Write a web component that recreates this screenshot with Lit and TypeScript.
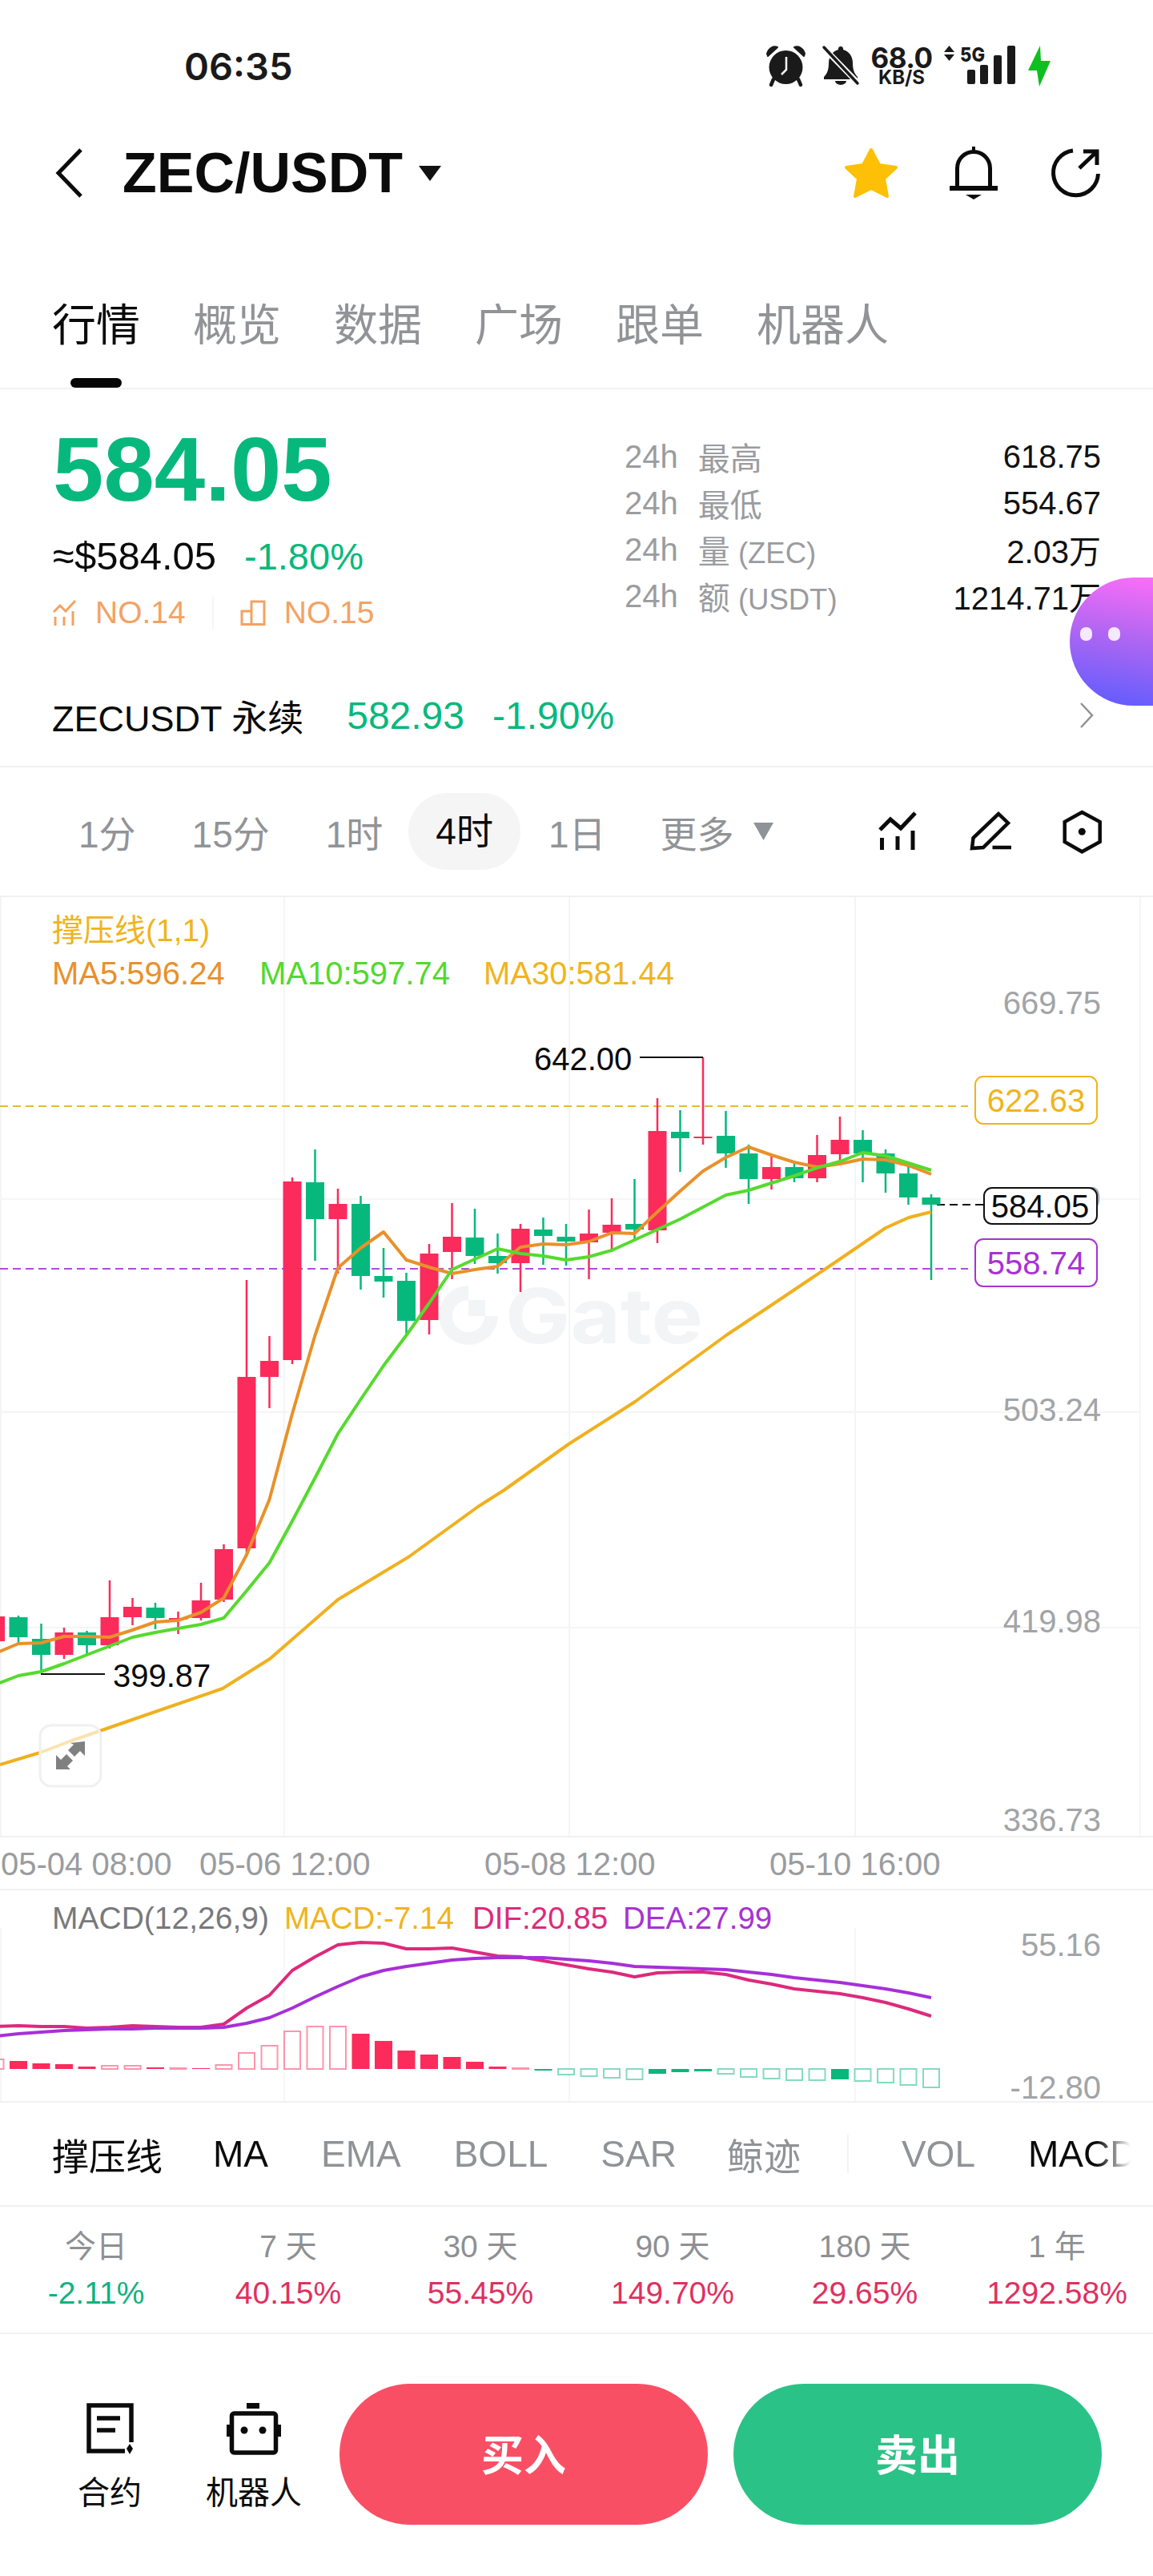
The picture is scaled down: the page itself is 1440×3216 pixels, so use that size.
import { LitElement, html, css, svg, unsafeCSS } from 'lit';
import { customElement } from 'lit/decorators.js';

type Candle = [number, number, number, number, boolean];

const X = (i: number) => 23 + 28.5 * i;
const RED = '#fb2b5b';
const GREEN = '#07b87c';

// wick top, body top, body bottom, wick bottom, rising. Index starts at -1
const CANDLES: Candle[] = [
  [2018, 2018, 2049, 2049, true],
  [2017, 2019, 2044, 2051, false],
  [2027, 2046, 2066, 2089, false],
  [2032, 2038, 2066, 2071, true],
  [2036, 2038, 2054, 2065, false],
  [1973, 2019, 2054, 2058, true],
  [1995, 2006, 2019, 2029, true],
  [2001, 2007, 2020, 2034, false],
  [2012, 2020, 2022, 2040, true],
  [1976, 1998, 2020, 2023, true],
  [1928, 1934, 1997, 2000, true],
  [1598, 1719, 1933, 1943, true],
  [1668, 1699, 1719, 1758, true],
  [1470, 1475, 1698, 1703, true],
  [1435, 1476, 1522, 1574, false],
  [1484, 1503, 1522, 1590, true],
  [1493, 1503, 1593, 1610, false],
  [1558, 1593, 1600, 1620, false],
  [1589, 1599, 1649, 1665, false],
  [1553, 1565, 1648, 1666, true],
  [1502, 1544, 1563, 1597, true],
  [1509, 1545, 1568, 1578, false],
  [1540, 1568, 1577, 1590, false],
  [1528, 1534, 1577, 1613, true],
  [1520, 1535, 1543, 1579, false],
  [1528, 1544, 1550, 1580, false],
  [1510, 1540, 1551, 1597, true],
  [1496, 1529, 1539, 1563, true],
  [1472, 1528, 1535, 1547, false],
  [1371, 1412, 1536, 1552, true],
  [1386, 1413, 1421, 1463, false],
  [1320, 1419, 1421, 1429, true],
  [1387, 1418, 1440, 1458, false],
  [1429, 1440, 1472, 1503, false],
  [1443, 1457, 1472, 1485, true],
  [1453, 1457, 1471, 1476, false],
  [1417, 1442, 1471, 1476, true],
  [1394, 1423, 1441, 1453, true],
  [1411, 1423, 1440, 1476, false],
  [1435, 1440, 1465, 1489, false],
  [1455, 1465, 1495, 1504, false],
  [1491, 1495, 1504, 1598, false],
];

const MA5 = [2064, 2052, 2051, 2043, 2043, 2044, 2035, 2025, 2023, 2013, 1995, 1941, 1872, 1765, 1667, 1583, 1558, 1538, 1573, 1582, 1590, 1585, 1581, 1557, 1553, 1554, 1550, 1539, 1540, 1513, 1487, 1462, 1445, 1432, 1442, 1451, 1457, 1453, 1447, 1448, 1455, 1466];
const MA10 = [2103, 2092, 2087, 2077, 2066, 2055, 2044, 2038, 2033, 2028, 2020, 1986, 1951, 1899, 1845, 1790, 1747, 1705, 1667, 1627, 1585, 1572, 1559, 1565, 1568, 1573, 1569, 1561, 1548, 1535, 1522, 1507, 1492, 1486, 1477, 1468, 1458, 1450, 1439, 1443, 1452, 1461];
const MA30 = '0,2203 50,2188 87,2174 165,2147 278,2108 337,2071 422,1997 510,1944 597,1881 630,1860 710,1803 793,1750 907,1667 967,1627 1040,1578 1106,1533 1135,1520 1163,1513';
const DIF = [2530, 2529, 2530, 2530, 2532, 2531, 2529, 2530, 2531, 2531, 2527, 2507, 2491, 2460, 2443, 2428, 2425, 2426, 2433, 2433, 2432, 2437, 2442, 2443, 2448, 2453, 2458, 2462, 2468, 2463, 2462, 2462, 2465, 2472, 2477, 2483, 2486, 2489, 2494, 2500, 2508, 2517];
const DEA = [2542, 2539, 2537, 2535, 2534, 2533, 2533, 2532, 2532, 2532, 2531, 2526, 2519, 2507, 2493, 2480, 2468, 2460, 2455, 2451, 2447, 2445, 2444, 2444, 2444, 2446, 2448, 2451, 2455, 2456, 2457, 2458, 2459, 2462, 2465, 2469, 2472, 2475, 2479, 2483, 2488, 2494];

// histogram height above the zero line, and whether the bar is filled
const HIST: [number, boolean][] = [
  [12, false], [10, true], [7, true], [6, true], [3, true], [4, false], [4, false], [2, true], [1, false], [1, true], [5, false],
  [20, false], [29, false], [47, false], [53, false], [53, false], [44, true], [35, true], [23, true], [18, true], [15, true],
  [9, true], [3, true], [1, false], [-2, true], [-7, false], [-9, false], [-11, false], [-13, false], [-6, true], [-4, true],
  [-3, true], [-6, false], [-10, false], [-12, false], [-14, false], [-14, false], [-13, true], [-15, false], [-17, false], [-20, false], [-23, false],
];

const STATS = [
  ['最高', '', '618.75'],
  ['最低', '', '554.67'],
  ['量', ' (ZEC)', '2.03万'],
  ['额', ' (USDT)', '1214.71万'],
];
const PERIODS = [
  ['今日', '-2.11%', true],
  ['7 天', '40.15%', false],
  ['30 天', '55.45%', false],
  ['90 天', '149.70%', false],
  ['180 天', '29.65%', false],
  ['1 年', '1292.58%', false],
];

const points = (ys: number[]) => ys.map((y, n) => `${X(n - 1)},${y}`).join(' ');

@customElement('app-root')
export class AppRoot extends LitElement {
  static styles = css`
    :host {
      display: block;
      position: relative;
      width: 1440px;
      height: 3216px;
      overflow: hidden;
      background: #fff;
      color: #0b0b0b;
      font-family: 'Liberation Sans', 'Noto Sans CJK SC', sans-serif;
    }

    svg { display: block; overflow: visible; }

    /* Status bar */
    .status {
      height: 164px;
      display: flex;
      align-items: center;
      padding: 0 128px 0 230px;
      font-family: Inter, 'Liberation Sans', sans-serif;
      color: #1a1a1a;
    }
    .time { font-size: 47px; font-weight: 600; }
    .status-icons {
      margin-left: auto;
      display: flex;
      align-items: center;
    }
    .bell-off { margin-left: 21px; }
    .speed {
      width: 78px;
      margin: 0 14px;
      display: flex;
      flex-direction: column;
      align-items: center;
      font-weight: 600;
    }
    .speed b { font-size: 35px; line-height: 30px; font-weight: 700; letter-spacing: -0.5px; }
    .speed span { font-size: 24px; line-height: 20px; font-weight: 700; }
    .bolt { margin-left: 16px; }

    /* Header */
    .header {
      height: 104px;
      display: flex;
      align-items: center;
      padding-left: 68px;
    }
    .pair {
      margin-left: 50px;
      font-size: 70px;
      font-weight: 700;
    }
    .caret { margin-left: 20px; }
    .star { margin-left: auto; }
    .bell { margin-left: 63px; }
    .share { margin: 0 65px 0 66px; }

    /* Tabs */
    .tabs {
      height: 216px;
      border-bottom: 2px solid #f1f1f1;
      padding-left: 65px;
    }
    .tab-row {
      display: flex;
      gap: 66px;
      padding-top: 111px;
      font-size: 55px;
      line-height: 54px;
      color: #919396;
    }
    .tab-row .on { color: #0b0b0b; }
    .tab-mark {
      width: 64px;
      height: 12px;
      margin: 39px 0 0 23px;
      border-radius: 6px;
      background: #050505;
    }

    /* Summary */
    .summary {
      height: 344px;
      display: flex;
      justify-content: space-between;
      padding: 0 65px 0 66px;
    }
    .last {
      margin-top: 44px;
      font-size: 114px;
      line-height: 112px;
      font-weight: 700;
      color: ${unsafeCSS(GREEN)};
    }
    .fiat {
      display: flex;
      align-items: baseline;
      gap: 35px;
      margin-top: 24px;
      font-size: 49px;
      line-height: 56px;
    }
    .fiat .up { font-size: 47px; color: ${unsafeCSS(GREEN)}; }
    .ranks {
      display: flex;
      align-items: center;
      margin-top: 22px;
      font-size: 39px;
      line-height: 40px;
      color: #f3a263;
    }
    .ranks svg { margin-right: 23px; }
    .ranks i {
      width: 2px;
      height: 40px;
      margin: 0 33px 0 33px;
      background: #f4f4f4;
    }
    .stats {
      width: 595px;
      padding-top: 55px;
    }
    .stat {
      height: 58px;
      display: flex;
      align-items: center;
      font-size: 40px;
      color: #9a9c9f;
      white-space: pre;
    }
    .stat em { font-style: normal; margin-left: 25px; }
    .stat small { font-size: 36.5px; }
    .stat span { margin-left: auto; color: #111; }

    /* Perpetual row */
    .perp {
      height: 126px;
      display: flex;
      align-items: center;
      padding: 0 74px 0 65px;
      border-bottom: 2px solid #f1f1f1;
      font-size: 45px;
    }
    .perp .num {
      margin-left: 35px;
      font-size: 48px;
      color: ${unsafeCSS(GREEN)};
    }
    .perp .first { margin-left: 54px; }
    .perp svg { margin-left: auto; }

    /* Intervals */
    .intervals {
      height: 160px;
      display: flex;
      align-items: center;
      gap: 70px;
      padding-left: 98px;
      border-bottom: 2px solid #f1f1f1;
      font-size: 46px;
      color: #919396;
    }
    .intervals .on {
      height: 96px;
      line-height: 96px;
      margin: 0 -35px 0 -38px;
      padding: 0 34px;
      border-radius: 48px;
      background: #f5f5f5;
      color: #0b0b0b;
    }
    .more { display: flex; align-items: center; gap: 24px; margin-left: -2px; }
    .tools {
      margin-left: auto;
      display: flex;
      align-items: center;
      padding-right: 64px;
    }
    .pencil { margin-left: 68px; }
    .hex { margin-left: 63px; }

    /* Chart text */
    .t { font-size: 40px; fill: #a2a4a7; }
    .k { fill: #0b0b0b; }
    .yl { fill: #f0b41c; }
    .or { fill: #e8912a; }
    .gr { fill: #52d92c; }
    .pu { fill: #a832d4; }
    .pk { fill: #dc2a7c; }
    .dg { fill: #77797c; }
    .small { font-size: 38.5px; }
    .medium { font-size: 39px; }
    .mark { font-family: Inter, 'Liberation Sans', sans-serif; }

    .rule { height: 2px; background: #f1f1f1; }

    .axis {
      height: 64px;
      display: flex;
      gap: 140px;
      padding-left: 1px;
      font-size: 40px;
      line-height: 66px;
      color: #9a9c9f;
      white-space: nowrap;
    }
    .axis span { width: 216px; }
    .axis span:first-child { margin-right: -108px; }

    /* Indicator row */
    .indicators {
      height: 128px;
      display: flex;
      align-items: center;
      gap: 66px;
      padding-left: 65px;
      width: 1347px;
      overflow: hidden;
      font-size: 46px;
      color: #8f9296;
      white-space: nowrap;
      -webkit-mask-image: linear-gradient(to right, #000 1370px, transparent 1412px);
      mask-image: linear-gradient(to right, #000 1370px, transparent 1412px);
    }
    .indicators .on { color: #0b0b0b; }
    .indicators .lead { margin-right: -3px; }
    .indicators .whale { margin-left: -3px; }
    .indicators i {
      flex: none;
      width: 2px;
      height: 48px;
      margin-left: -8px;
      background: #f3f3f3;
    }

    /* Periods */
    .periods {
      height: 157px;
      display: grid;
      grid-template-columns: repeat(6, 240px);
      text-align: center;
    }
    .period span {
      display: block;
      margin-top: 30px;
      font-size: 39px;
      line-height: 40px;
      color: #8e9093;
    }
    .period b {
      display: block;
      margin-top: 18px;
      font-size: 39px;
      line-height: 40px;
      font-weight: 400;
      color: #e0305f;
    }
    .period b.down { color: #10b27e; }

    /* Bottom bar */
    .bar {
      display: flex;
      padding: 62px 0 0 77px;
    }
    .tool {
      width: 120px;
      margin: 24px 60px 0 0;
      display: flex;
      flex-direction: column;
      align-items: center;
      font-size: 40px;
      line-height: 40px;
      white-space: nowrap;
    }
    .tool svg { margin-bottom: 28px; }
    .tool + .tool { margin-right: 47px; }
    .btn {
      height: 172px;
      width: 460px;
      padding-bottom: 4px;
      border-radius: 88px;
      display: flex;
      align-items: center;
      justify-content: center;
      font-size: 53px;
      font-weight: 700;
      color: #fff;
      background: #f94f64;
    }
    .btn.sell {
      margin-left: 32px;
      background: #2bc287;
    }

    /* Floating assistant */
    .blob {
      position: absolute;
      top: 721px;
      right: 0;
      width: 104px;
      height: 160px;
      border-radius: 80px 0 0 80px;
      background: linear-gradient(190deg, #fb6ef8 0%, #b066f2 45%, #5a5cff 100%);
    }
    .blob i {
      position: absolute;
      top: 62px;
      width: 15px;
      height: 17px;
      border-radius: 7px;
      background: #f4e9ff;
    }
    .blob i:first-child { left: 13px; }
    .blob i:last-child { left: 48px; }
  `;

  private label(x: number, cy: number, text: string, cls = '', anchor = 'start') {
    return svg`<text class="t ${cls}" x=${x} y=${cy + 14} text-anchor=${anchor}>${text}</text>`;
  }

  private priceChart() {
    return html`
      <svg width="1440" height="1172" viewBox="0 1120 1440 1172">
        <g stroke="#f4f5f6" stroke-width="2">
          ${[1, 355, 711, 1068, 1424].map((x) => svg`<line x1=${x} x2=${x} y1="1120" y2="2292" />`)}
          ${[1497, 1763, 2032].map((y) => svg`<line x1="0" x2="1424" y1=${y} y2=${y} />`)}
        </g>

        <g fill="#f3f4f5">
          <path d="M585 1605a37 37 0 1 0 37 38h-17a20 20 0 1 1-20-20z" />
          <rect x="585" y="1623" width="21" height="20" />
          <text class="mark" x="631" y="1677" font-size="95" font-weight="700" textLength="247" lengthAdjust="spacingAndGlyphs">Gate</text>
        </g>

        <g stroke-width="2.2" stroke-dasharray="10 6" fill="none">
          <line x1="0" x2="1209" y1="1381" y2="1381" stroke="#e6b93a" />
          <line x1="0" x2="1209" y1="1584" y2="1584" stroke="#b04cd6" />
          <line x1="1170" x2="1228" y1="1504" y2="1504" stroke="#111" />
        </g>

        ${CANDLES.map(([top, open, close, bottom, up], n) => {
          const x = X(n - 1);
          const color = up ? RED : GREEN;
          return svg`
            <rect x=${x - 1.25} y=${top} width="2.5" height=${bottom - top} fill=${color} />
            <rect x=${x - 11.5} y=${open} width="23" height=${close - open} fill=${color} />
          `;
        })}

        <g fill="none" stroke-width="4" stroke-linejoin="round">
          <polyline points=${MA30} stroke="#f0b01e" />
          <polyline points=${points(MA5)} stroke="#e8912a" />
          <polyline points=${points(MA10)} stroke="#55da2e" />
        </g>

        <g stroke="#111" stroke-width="2">
          <line x1="799" x2="878" y1="1320" y2="1320" />
          <line x1="51" x2="131" y1="2090" y2="2090" />
        </g>
        ${this.label(667, 1322, '642.00', 'k')}
        ${this.label(141, 2092, '399.87', 'k')}

        <text class="t yl" x="65" y="1175"><tspan font-size="39">撑压线(1,1)</tspan></text>
        ${this.label(65, 1215, 'MA5:596.24', 'or')}
        ${this.label(324, 1215, 'MA10:597.74', 'gr')}
        ${this.label(604, 1215, 'MA30:581.44', 'yl')}

        ${this.label(1375, 1252, '669.75', '', 'end')}
        ${this.label(1375, 1496, '586.49', '', 'end')}
        ${this.label(1375, 1760, '503.24', '', 'end')}
        ${this.label(1375, 2024, '419.98', '', 'end')}
        ${this.label(1375, 2272, '336.73', '', 'end')}

        <rect x="1218" y="1344" width="152" height="59" rx="10" fill="#fff" stroke="#f0b41c" stroke-width="2" />
        ${this.label(1294, 1374, '622.63', 'yl', 'middle')}
        <rect x="1229" y="1483" width="141" height="45" rx="10" fill="#fff" stroke="#111" stroke-width="2" />
        ${this.label(1299, 1506, '584.05', 'k', 'middle')}
        <rect x="1218" y="1547" width="152" height="59" rx="10" fill="#fff" stroke="#a832d4" stroke-width="2" />
        ${this.label(1294, 1577, '558.74', 'pu', 'middle')}

        <rect x="50" y="2154" width="76" height="76" rx="14" fill="#fff" fill-opacity="0.65" stroke="#f0f0f0" stroke-width="3" />
        <g fill="#808080">
          <path d="M88 2176l18-2v18l-6-6-7 7-8-8 7-7z" />
          <path d="M70 2191l6 6 7-7 8 8-7 7 4 4H70z" />
        </g>
      </svg>
    `;
  }

  private macdChart() {
    const zero = 2583;
    return html`
      <svg width="1440" height="263" viewBox="0 2360 1440 263">
        <g stroke="#f5f6f7" stroke-width="2">
          ${[1, 355, 711, 1068].map((x) => svg`<line x1=${x} x2=${x} y1="2407" y2="2623" />`)}
        </g>

        ${HIST.map(([h, solid], n) => {
          const x = X(n - 1) - 11;
          const color = h > 0 ? RED : GREEN;
          const y = h > 0 ? zero - h : zero;
          const height = Math.abs(h);
          return solid
            ? svg`<rect x=${x} y=${y} width="22" height=${height} fill=${color} />`
            : svg`<rect x=${x + 1} y=${y} width="20" height=${height} fill="#fff" stroke=${color} stroke-opacity="0.5" stroke-width="2" />`;
        })}

        <g fill="none" stroke-width="4" stroke-linejoin="round">
          <polyline points=${points(DIF)} stroke="#dc2a7c" />
          <polyline points=${points(DEA)} stroke="#a630d8" />
        </g>

        <text class="t medium dg" x="65" y="2408">MACD(12,26,9)</text>
        <text class="t small yl" x="355" y="2408">MACD:-7.14</text>
        <text class="t small pk" x="590" y="2408">DIF:20.85</text>
        <text class="t small pu" x="778" y="2408">DEA:27.99</text>

        ${this.label(1375, 2428, '55.16', '', 'end')}
        ${this.label(1375, 2606, '-12.80', '', 'end')}
      </svg>
    `;
  }

  render() {
    return html`
      <div class="status">
        <span class="time">06:35</span>
        <div class="status-icons">
          <svg width="49" height="50" viewBox="0 0 49 50">
            <path d="M1 10C3 3 9 0 14 2L2 13zM48 10C46 3 40 0 35 2L47 13z" fill="#1a1a1a" stroke="#1a1a1a" stroke-width="2" stroke-linejoin="round" />
            <circle cx="24.5" cy="27" r="21" fill="#1a1a1a" />
            <path d="M25 14V30L19 36" fill="none" stroke="#fff" stroke-width="2.5" />
            <path d="M9 42L6 49M40 42L43 49" stroke="#1a1a1a" stroke-width="4.5" stroke-linecap="round" />
          </svg>
          <svg class="bell-off" width="46" height="48" viewBox="0 0 46 48">
            <path d="M23 0a3 3 0 0 1 3 4c8 2 12 9 12 17 0 8 2 13 6 17v3H2v-3c4-4 6-9 6-17 0-8 4-15 12-17a3 3 0 0 1 3-4zM16 43h14a7 5 0 0 1-14 0z" fill="#1a1a1a" />
            <path d="M2 2L44 45" stroke="#fff" stroke-width="7" />
            <path d="M2 1L44 46" stroke="#1a1a1a" stroke-width="3.5" stroke-linecap="round" />
          </svg>
          <div class="speed"><b>68.0</b><span>KB/S</span></div>
          <svg width="89" height="50" viewBox="0 0 89 50">
            <path d="M6.500 0L13 8H0zM6.500 19L0 11H13z" fill="#1a1a1a" />
            <text x="20" y="20" font-size="25" font-weight="800" fill="#1a1a1a" textLength="31" lengthAdjust="spacingAndGlyphs">5G</text>
            <g fill="#1a1a1a">
              <rect x="29" y="30" width="10" height="18" rx="2" />
              <rect x="45" y="24" width="10" height="24" rx="2" />
              <rect x="62" y="12" width="10" height="36" rx="2" />
              <rect x="79" y="0" width="10" height="48" rx="2" />
            </g>
          </svg>
          <svg class="bolt" width="28" height="51" viewBox="0 0 28 51">
            <path d="M15 0L0 31H11L14 51 28 19H16z" fill="#0fbf1f" />
          </svg>
        </div>
      </div>

      <div class="header">
        <svg width="35" height="62" viewBox="0 0 35 62">
          <path d="M33 2L5 31 33 60" fill="none" stroke="#0b0b0b" stroke-width="5" />
        </svg>
        <span class="pair">ZEC/USDT</span>
        <svg class="caret" width="28" height="19" viewBox="0 0 28 19"><path d="M0 0H28L14 19z" fill="#111" /></svg>
        <svg class="star" width="68" height="64" viewBox="0 0 68 64">
          <path d="M34 3L44 22 65 25 50 39 54 61 34 51 14 61 18 39 3 25 24 22z" fill="#fdc006" stroke="#fdc006" stroke-width="4" stroke-linejoin="round" />
        </svg>
        <svg class="bell" width="62" height="66" viewBox="0 0 62 66">
          <path d="M10.500 49V27A20.500 20.500 0 0 1 51.500 27V49" fill="none" stroke="#0b0b0b" stroke-width="5" />
          <path d="M1 49H61V55H1zM29 0H33V7H29zM21 60H41L31 66z" fill="#0b0b0b" />
        </svg>
        <svg class="share" width="62" height="64" viewBox="0 0 62 64">
          <path d="M27 4A28 28 0 1 0 58.500 33" fill="none" stroke="#0b0b0b" stroke-width="5" />
          <path d="M35 26L56 6M40 5H57V22" fill="none" stroke="#0b0b0b" stroke-width="5" />
        </svg>
      </div>

      <div class="tabs">
        <div class="tab-row">
          <span class="on">行情</span><span>概览</span><span>数据</span><span>广场</span><span>跟单</span><span>机器人</span>
        </div>
        <div class="tab-mark"></div>
      </div>

      <div class="summary">
        <div>
          <div class="last">584.05</div>
          <div class="fiat"><span>≈$584.05</span><span class="up">-1.80%</span></div>
          <div class="ranks">
            <svg width="30" height="32" viewBox="0 0 30 32" fill="none" stroke="#f3a263" stroke-width="3">
              <path d="M1 15L9 7 16 14 28 1M3 21V32M14 21V32M25 14V32" />
            </svg>
            <span>NO.14</span>
            <i></i>
            <svg width="32" height="32" viewBox="0 0 32 32" fill="none" stroke="#f3a263" stroke-width="3">
              <path d="M2 14H14V30.500H2zM14 30.500H30V2H14V14" />
            </svg>
            <span>NO.15</span>
          </div>
        </div>
        <div class="stats">
          ${STATS.map(([a, b, c]) => html`<div class="stat">24h<em>${a}<small>${b}</small></em><span>${c}</span></div>`)}
        </div>
      </div>

      <div class="perp">
        <span>ZECUSDT 永续</span>
        <span class="num first">582.93</span>
        <span class="num">-1.90%</span>
        <svg width="18" height="32" viewBox="0 0 18 32"><path d="M2 1L16 16 2 31" fill="none" stroke="#8f9296" stroke-width="2.500" /></svg>
      </div>

      <div class="intervals">
        <span>1分</span><span>15分</span><span>1时</span><span class="on">4时</span><span>1日</span>
        <span class="more">更多
          <svg width="25" height="22" viewBox="0 0 25 22"><path d="M0 0H25L12.500 22z" fill="#8f9296" /></svg>
        </span>
        <div class="tools">
          <svg width="46" height="48" viewBox="0 0 46 48" fill="none" stroke="#0b0b0b" stroke-width="5">
            <path d="M1 22L14 9 27 20 45 1M3.500 32V47M23 30V47M42 23V47" />
          </svg>
          <svg class="pencil" width="52" height="48" viewBox="0 0 52 48" fill="none" stroke="#0b0b0b" stroke-width="4.500">
            <path d="M2 45L3.500 32 35 2 47 13.500 16 44zM27.500 44H51" />
          </svg>
          <svg class="hex" width="49" height="53" viewBox="0 0 49 53" fill="none" stroke="#0b0b0b" stroke-width="4.500">
            <path d="M24.300 2L46.700 14V39L24.300 51.300 2.700 39V14z" />
            <circle cx="24.300" cy="26.300" r="4.500" fill="#0b0b0b" stroke="none" />
          </svg>
        </div>
      </div>

      ${this.priceChart()}
      <div class="rule"></div>

      <div class="axis">
        <span>05-04 08:00</span><span>05-06 12:00</span><span>05-08 12:00</span><span>05-10 16:00</span>
      </div>
      <div class="rule"></div>

      ${this.macdChart()}
      <div class="rule"></div>

      <div class="indicators">
        <span class="on lead">撑压线</span>
        <span class="on">MA</span><span>EMA</span><span>BOLL</span><span>SAR</span><span class="whale">鲸迹</span>
        <i></i>
        <span>VOL</span><span class="on">MACD</span>
      </div>
      <div class="rule"></div>

      <div class="periods">
        ${PERIODS.map(([name, value, down]) => html`
          <div class="period"><span>${name}</span><b class=${down ? 'down' : ''}>${value}</b></div>
        `)}
      </div>
      <div class="rule"></div>

      <div class="bar">
        <div class="tool">
          <svg width="60" height="64" viewBox="0 0 60 64" fill="none" stroke="#0b0b0b" stroke-width="5.500">
            <path d="M57 49V3H4V60H49M14 19H43M14 34H37" />
            <path d="M55 51L59 57 55 64 51 57z" fill="#0b0b0b" stroke="none" />
          </svg>
          <span>合约</span>
        </div>
        <div class="tool">
          <svg width="68" height="64" viewBox="0 0 68 64">
            <path d="M25 0H41V7H25z" fill="#0b0b0b" />
            <rect x="6.500" y="13" width="55" height="49" rx="3" fill="none" stroke="#0b0b0b" stroke-width="5.500" />
            <path d="M0 27H4V42H0zM64 27H68V42H64z" fill="#0b0b0b" />
            <circle cx="22" cy="34" r="4.500" fill="#0b0b0b" />
            <circle cx="45" cy="34" r="4.500" fill="#0b0b0b" />
          </svg>
          <span>机器人</span>
        </div>
        <div class="btn">买入</div>
        <div class="btn sell">卖出</div>
      </div>

      <div class="blob"><i></i><i></i></div>
    `;
  }
}

declare global {
  interface HTMLElementTagNameMap {
    'app-root': AppRoot;
  }
}
